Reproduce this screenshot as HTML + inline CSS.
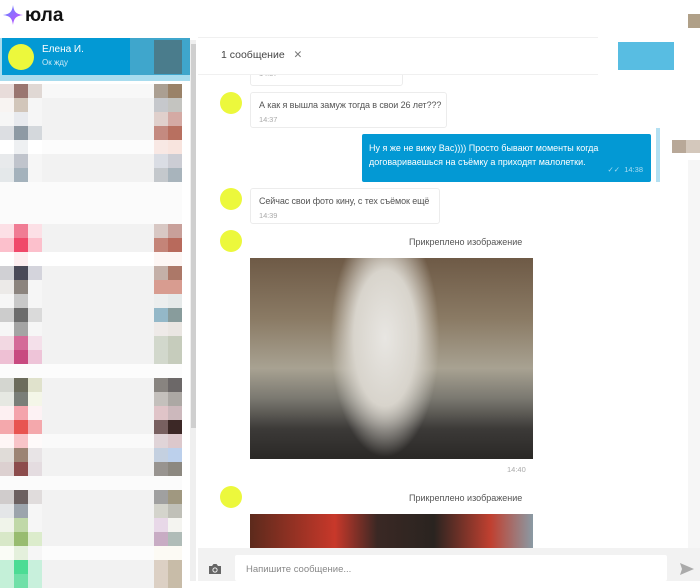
<!DOCTYPE html>
<html><head><meta charset="utf-8"><style>
*{margin:0;padding:0;box-sizing:border-box}
body{width:700px;height:581px;overflow:hidden;background:#fff;font-family:"Liberation Sans","DejaVu Sans",sans-serif;position:relative;color:#444}
.a{position:absolute}
.r{position:absolute;left:0;width:182px;height:14px;display:flex}
.r i{width:14px;height:14px;display:block;background:#f6f6f6}
.r b{width:112px;height:14px;display:block;background:#f2f2f2}
.av{position:absolute;width:22px;height:22px;border-radius:50%;background:#ecf83c}
.bub{position:absolute;background:#fff;border:1px solid #ececec;border-radius:3px;font-size:9px;color:#555;padding:7px 8px;white-space:nowrap;letter-spacing:-0.1px}
.t{font-size:7.5px;color:#aaa;margin-top:5px}
</style></head><body>
<svg class="a" style="left:2px;top:4px" width="22" height="22" viewBox="0 0 22 22"><defs><linearGradient id="g" x1="0" y1="0" x2="1" y2="1"><stop offset="0" stop-color="#5a8cff"/><stop offset="1" stop-color="#d048ff"/></linearGradient></defs><path d="M11 1 C12 8 14 10 21 11 C14 12 12 14 11 21 C10 14 8 12 1 11 C8 10 10 8 11 1Z" fill="url(#g)"/></svg>
<div class="a" style="left:25px;top:5px;font-size:19px;font-weight:bold;color:#111">юла</div>
<div class="a" style="left:0;top:38px;width:190px;height:43px;background:#a8dcee"></div>
<div class="a" style="left:2px;top:38px;width:128px;height:37px;background:#0399d4"></div>
<div class="a" style="left:130px;top:38px;width:60px;height:37px;background:#3fa6cc"></div>
<div class="a" style="left:154px;top:40px;width:28px;height:34px;background:#4a7c8c"></div>
<div class="av" style="left:8px;top:44px;width:26px;height:26px"></div>
<div class="a" style="left:42px;top:44px;font-size:10px;color:#fff">Елена И.</div>
<div class="a" style="left:42px;top:58px;font-size:8px;color:#cfeaf6">Ок жду</div>
<div class="a" style="left:190px;top:40px;width:6px;height:541px;background:#efefef"></div>
<div class="a" style="left:191px;top:44px;width:5px;height:384px;background:#cfcfcf"></div>

<div class="r" style="top:84px"><i style="background:#e8dcda"></i><i style="background:#9a7670"></i><i style="background:#e0d8d4"></i><b style="background:#f8f8f8"></b><i style="background:#ab9f92"></i><i style="background:#9a8268"></i></div>
<div class="r" style="top:98px"><i style="background:#f8f4f2"></i><i style="background:#d2c6ba"></i><i></i><b></b><i style="background:#c6c8cc"></i><i style="background:#c4c4c0"></i></div>
<div class="r" style="top:112px"><i></i><i style="background:#e8eaee"></i><i></i><b></b><i style="background:#e0d0cc"></i><i style="background:#d4aaa4"></i></div>
<div class="r" style="top:126px"><i style="background:#dcdee2"></i><i style="background:#8e9aa4"></i><i style="background:#d4d8dc"></i><b></b><i style="background:#c48a80"></i><i style="background:#b87060"></i></div>
<div class="r" style="top:140px"><i style="background:#fff"></i><i style="background:#eef0f2"></i><i style="background:#fff"></i><b style="background:#fcfcfc"></b><i style="background:#f8e8e4"></i><i style="background:#f8e4de"></i></div>
<div class="r" style="top:154px"><i style="background:#e8eaec"></i><i style="background:#c0c4cc"></i><i></i><b></b><i style="background:#dadde4"></i><i style="background:#cccdd4"></i></div>
<div class="r" style="top:168px"><i style="background:#e4e8ea"></i><i style="background:#a4b2bc"></i><i></i><b></b><i style="background:#c4c8cc"></i><i style="background:#a8b4bc"></i></div>
<div class="r" style="top:182px;width:182px;height:42px;background:#fbfbfb"></div>
<div class="r" style="top:224px"><i style="background:#fce0e6"></i><i style="background:#f07c94"></i><i style="background:#fce0e6"></i><b></b><i style="background:#d8c8c4"></i><i style="background:#c8a09a"></i></div>
<div class="r" style="top:238px"><i style="background:#fcc0cc"></i><i style="background:#f0496a"></i><i style="background:#fcc0cc"></i><b></b><i style="background:#c48478"></i><i style="background:#b86a5c"></i></div>
<div class="r" style="top:252px"><i style="background:#fff"></i><i style="background:#fdeef0"></i><i style="background:#fff"></i><b style="background:#fff"></b><i style="background:#fdf6f4"></i><i style="background:#fdf6f4"></i></div>
<div class="r" style="top:266px"><i style="background:#d0d0d4"></i><i style="background:#4a4a58"></i><i style="background:#d4d4dc"></i><b></b><i style="background:#c4b0a8"></i><i style="background:#ac7868"></i></div>
<div class="r" style="top:280px"><i style="background:#eceae8"></i><i style="background:#8c847e"></i><i></i><b></b><i style="background:#d89c90"></i><i style="background:#d89c90"></i></div>
<div class="r" style="top:294px"><i></i><i style="background:#c8c8c8"></i><i></i><b></b><i style="background:#eceeee"></i><i style="background:#e6eaea"></i></div>
<div class="r" style="top:308px"><i style="background:#cccccc"></i><i style="background:#6c6c6c"></i><i style="background:#dadada"></i><b></b><i style="background:#94b8c8"></i><i style="background:#889c9c"></i></div>
<div class="r" style="top:322px"><i></i><i style="background:#a4a4a4"></i><i></i><b></b><i style="background:#eeeae8"></i><i style="background:#eae6e2"></i></div>
<div class="r" style="top:336px"><i style="background:#f2d8e2"></i><i style="background:#d46a98"></i><i style="background:#f4e0ea"></i><b></b><i style="background:#d2d8cc"></i><i style="background:#c6ccbc"></i></div>
<div class="r" style="top:350px"><i style="background:#eec0d4"></i><i style="background:#c84a80"></i><i style="background:#eec4d8"></i><b></b><i style="background:#d2d8cc"></i><i style="background:#c6ccbc"></i></div>
<div class="r" style="top:364px;height:14px;background:#fcfcfc"></div>
<div class="r" style="top:378px"><i style="background:#d4d6d0"></i><i style="background:#6c6c5c"></i><i style="background:#e0e2cc"></i><b></b><i style="background:#888480"></i><i style="background:#6c6868"></i></div>
<div class="r" style="top:392px"><i style="background:#e6e8e2"></i><i style="background:#7a7e78"></i><i style="background:#f4f6e8"></i><b></b><i style="background:#c4c0bc"></i><i style="background:#aca8a4"></i></div>
<div class="r" style="top:406px"><i style="background:#fdf0f2"></i><i style="background:#f4a4ac"></i><i style="background:#fdf2f4"></i><b></b><i style="background:#e0c4c8"></i><i style="background:#ccb8bc"></i></div>
<div class="r" style="top:420px"><i style="background:#f4a8ac"></i><i style="background:#e85450"></i><i style="background:#f4a8ac"></i><b></b><i style="background:#786060"></i><i style="background:#3c2826"></i></div>
<div class="r" style="top:434px"><i style="background:#fef6f6"></i><i style="background:#f8c4c8"></i><i style="background:#fefafa"></i><b style="background:#fafafa"></b><i style="background:#e0d4d8"></i><i style="background:#dcc8cc"></i></div>
<div class="r" style="top:448px"><i style="background:#e0dcd8"></i><i style="background:#9c8474"></i><i style="background:#e8e4e6"></i><b></b><i style="background:#c4d0e0"></i><i style="background:#bcd0ec"></i></div>
<div class="r" style="top:462px"><i style="background:#dcd0d0"></i><i style="background:#8c4c4c"></i><i style="background:#e4dce0"></i><b></b><i style="background:#989490"></i><i style="background:#8c8880"></i></div>
<div class="r" style="top:476px;background:#fbfbfb"></div>
<div class="r" style="top:490px"><i style="background:#d0cccc"></i><i style="background:#6c6060"></i><i style="background:#e0dcdc"></i><b></b><i style="background:#a0a0a0"></i><i style="background:#a09880"></i></div>
<div class="r" style="top:504px"><i style="background:#e4e6e8"></i><i style="background:#9ca4ac"></i><i></i><b></b><i style="background:#d4d4cc"></i><i style="background:#c0c0b8"></i></div>
<div class="r" style="top:518px"><i style="background:#f0f4ea"></i><i style="background:#c0d8a8"></i><i></i><b></b><i style="background:#e8d8e8"></i><i style="background:#f4f4f0"></i></div>
<div class="r" style="top:532px"><i style="background:#d8e8c8"></i><i style="background:#98bc70"></i><i style="background:#dceccc"></i><b></b><i style="background:#c8acc4"></i><i style="background:#b0bcb8"></i></div>
<div class="r" style="top:546px"><i style="background:#fafcf6"></i><i style="background:#e4f0dc"></i><i></i><b style="background:#fcfcfc"></b><i style="background:#fcfaf4"></i><i style="background:#fcfaf4"></i></div>
<div class="r" style="top:560px"><i style="background:#c4f0d8"></i><i style="background:#4cdc94"></i><i style="background:#c8f0dc"></i><b></b><i style="background:#dcd0c4"></i><i style="background:#c8bca8"></i></div>
<div class="r" style="top:574px"><i style="background:#c4f0d8"></i><i style="background:#70e0a8"></i><i style="background:#c8f0dc"></i><b></b><i style="background:#dcd0c4"></i><i style="background:#c8bca8"></i></div>

<!-- header -->
<div class="a" style="left:198px;top:37px;width:400px;height:38px;border-top:1px solid #f0f0f0;border-bottom:1px solid #f0f0f0;background:#fff;z-index:2"></div>
<div class="a" style="left:221px;top:49px;font-size:10.5px;color:#444;z-index:3">1 сообщение &nbsp;&nbsp;<span style="color:#777">✕</span></div>
<div class="a" style="left:618px;top:42px;width:56px;height:28px;background:#58bde2"></div>
<div class="a" style="left:688px;top:14px;width:12px;height:14px;background:#b0a088"></div>
<div class="a" style="left:672px;top:140px;width:14px;height:13px;background:#b8a898"></div>
<div class="a" style="left:686px;top:140px;width:14px;height:13px;background:#d4c8bc"></div>
<div class="a" style="left:688px;top:160px;width:12px;height:420px;background:#f6f6f6"></div>

<div class="bub" style="left:250px;top:60px;width:153px;height:26px;padding-top:8px"><div class="t" style="margin:0">14:37</div></div>
<div class="av" style="left:220px;top:92px"></div>
<div class="bub" style="left:250px;top:92px;width:197px;height:36px">А как я вышла замуж тогда в свои 26 лет???<div class="t">14:37</div></div>
<div class="a" style="left:362px;top:134px;width:289px;height:48px;background:#0399d4;border-radius:2px;color:#fff;font-size:9px;padding:7px 7px;line-height:14px">Ну я же не вижу Вас)))) Просто бывают моменты когда договариваешься на съёмку а приходят малолетки.<div style="position:absolute;right:8px;bottom:5px;font-size:7.5px;color:#a8dcf2">✓✓ &nbsp;14:38</div></div>
<div class="a" style="left:656px;top:128px;width:4px;height:54px;background:#b4e0f2"></div>
<div class="av" style="left:220px;top:188px"></div>
<div class="bub" style="left:250px;top:188px;width:190px;height:36px">Сейчас свои фото кину, с тех съёмок ещё<div class="t">14:39</div></div>
<div class="av" style="left:220px;top:230px"></div>
<div class="a" style="left:409px;top:237px;font-size:9px;color:#555">Прикреплено изображение</div>
<div class="a" style="left:250px;top:258px;width:283px;height:201px;background:linear-gradient(180deg,#6e5a46 0%,#8a7a64 30%,#a8a292 55%,#7a7870 70%,#3c3a38 85%,#2a2826 100%)"></div>
<div class="a" style="left:330px;top:258px;width:110px;height:200px;background:radial-gradient(ellipse at 50% 40%,#e8e6e2 0%,#d8d4cc 40%,rgba(200,190,180,0) 70%)"></div>
<div class="a" style="left:507px;top:465px;font-size:7.5px;color:#aaa">14:40</div>
<div class="av" style="left:220px;top:486px"></div>
<div class="a" style="left:409px;top:493px;font-size:9px;color:#555">Прикреплено изображение</div>
<div class="a" style="left:250px;top:514px;width:283px;height:34px;background:linear-gradient(90deg,#5c2a1c 0%,#c8382a 30%,#3a2824 45%,#2a2420 65%,#c04030 85%,#8a9aa4 100%)"></div>

<!-- input -->
<div class="a" style="left:198px;top:548px;width:502px;height:33px;background:#f2f2f2"></div>
<svg class="a" style="left:208px;top:563px" width="14" height="12" viewBox="0 0 14 12"><path d="M1 3h3l1.5-2h3L10 3h3v8H1z" fill="#666"/><circle cx="7" cy="7" r="2.6" fill="#f2f2f2"/><circle cx="7" cy="7" r="1.6" fill="#666"/></svg>
<div class="a" style="left:235px;top:555px;width:432px;height:26px;background:#fff;border-radius:2px"></div>
<div class="a" style="left:246px;top:564px;font-size:9.5px;color:#888">Напишите сообщение...</div>
<svg class="a" style="left:680px;top:563px" width="14" height="12" viewBox="0 0 14 12"><path d="M0 0L14 6L0 12L2 6z" fill="#aaa"/></svg>
</body></html>
